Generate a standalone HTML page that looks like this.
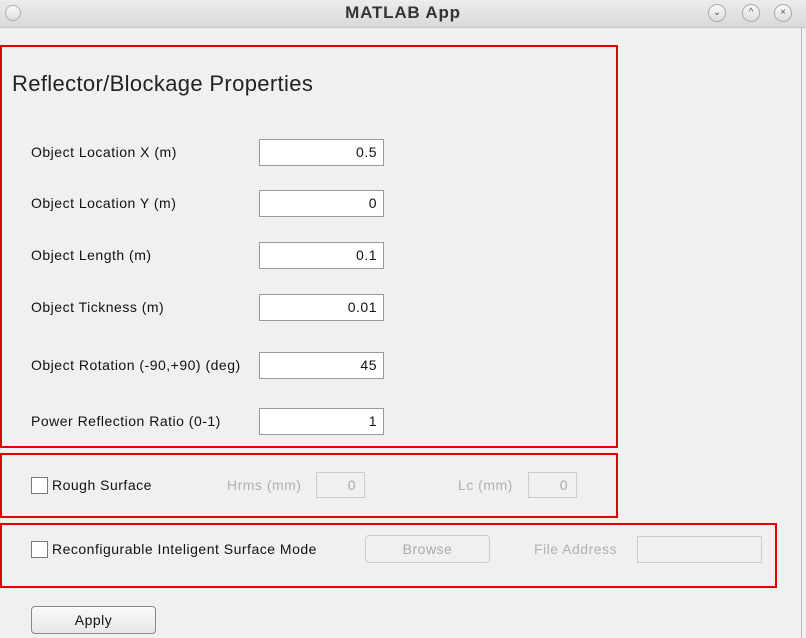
<!DOCTYPE html><html><head><style>
*{box-sizing:border-box;margin:0;padding:0}
body{width:806px;height:638px;background:#f0f0f0;font-family:"Liberation Sans",sans-serif;position:relative;overflow:hidden;font-size:14px;letter-spacing:0.5px;color:#111}
.tb{position:absolute;left:0;top:0;width:806px;height:28px;background:linear-gradient(#ececec,#d9d9d9);border-bottom:1px solid #c8c8c8;text-align:center;font-weight:bold;font-size:17px;letter-spacing:0.8px;line-height:26px;color:#333}
.c{position:absolute;top:4px;width:18px;height:18px;border-radius:50%;border:1px solid #aaa;background:linear-gradient(#fafafa,#ddd);font-size:10px;line-height:16px;text-align:center;color:#555;font-weight:normal;letter-spacing:0}
.r{position:absolute;border:2px solid #e00000}
.a{position:absolute}
.in{position:absolute;left:259px;width:125px;height:27px;background:#fff;border:1px solid #999;text-align:right;padding-right:6px;line-height:25px}
.lb{position:absolute;left:31px}
.g{color:#b0b0b0}
.cb{position:absolute;width:17px;height:17px;background:#fff;border:1px solid #777}
.dis{position:absolute;border:1px solid #ccc;background:#f0f0f0;text-align:right;padding-right:8px;color:#aaa}
</style></head><body>
<div class="tb">MATLAB App
<div class="c" style="left:5px;width:16px;height:16px;top:5px"></div>
<div class="c" style="left:708px">⌄</div><div class="c" style="left:742px">^</div><div class="c" style="left:774px">×</div></div>
<div style="position:absolute;left:801px;top:28px;width:1px;height:610px;background:#bbb"></div>
<div class="r" style="left:0;top:45px;width:618px;height:403px"></div>
<div class="r" style="left:0;top:453px;width:618px;height:65px"></div>
<div class="r" style="left:0;top:523px;width:777px;height:65px"></div>
<div class="a" style="left:12px;top:71px;font-size:22px;letter-spacing:0.35px;color:#222">Reflector/Blockage Properties</div>
<div class="lb" style="top:144px">Object Location X (m)</div><div class="in" style="top:139px">0.5</div>
<div class="lb" style="top:195px">Object Location Y (m)</div><div class="in" style="top:190px">0</div>
<div class="lb" style="top:247px">Object Length (m)</div><div class="in" style="top:242px">0.1</div>
<div class="lb" style="top:299px">Object Tickness (m)</div><div class="in" style="top:294px">0.01</div>
<div class="lb" style="top:357px">Object Rotation (-90,+90) (deg)</div><div class="in" style="top:352px">45</div>
<div class="lb" style="top:413px">Power Reflection Ratio (0-1)</div><div class="in" style="top:408px">1</div>
<div class="cb" style="left:31px;top:477px"></div><div class="a" style="left:52px;top:477px">Rough Surface</div>
<div class="a g" style="left:227px;top:477px">Hrms (mm)</div><div class="dis" style="left:316px;top:472px;width:49px;height:26px;line-height:24px">0</div>
<div class="a g" style="left:458px;top:477px">Lc (mm)</div><div class="dis" style="left:528px;top:472px;width:49px;height:26px;line-height:24px">0</div>
<div class="cb" style="left:31px;top:541px"></div><div class="a" style="left:52px;top:541px">Reconfigurable Inteligent Surface Mode</div>
<div class="dis" style="left:365px;top:535px;width:125px;height:28px;line-height:26px;text-align:center;padding:0;border-radius:4px">Browse</div>
<div class="a g" style="left:534px;top:541px">File Address</div>
<div class="dis" style="left:637px;top:536px;width:125px;height:27px"></div>
<div class="a" style="left:31px;top:606px;width:125px;height:28px;border:1px solid #888;border-radius:4px;background:linear-gradient(#fafafa,#e6e6e6);text-align:center;line-height:26px">Apply</div>
</body></html>
